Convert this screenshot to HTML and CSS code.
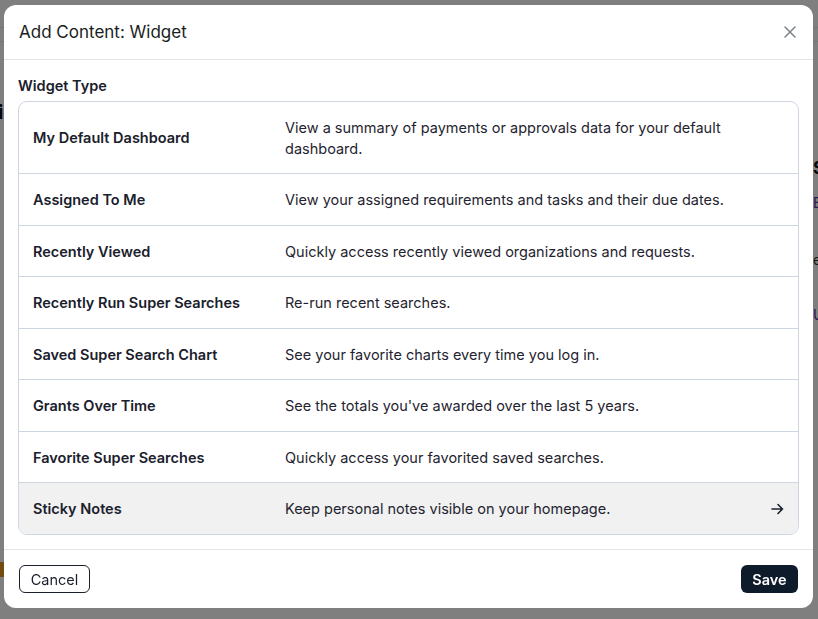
FILE: index.html
```html
<!DOCTYPE html>
<html lang="en">
<head>
    <meta charset="UTF-8">
    <meta name="viewport" content="width=device-width, initial-scale=1.0">
    <title>Add Content: Widget</title>
    <link rel="stylesheet" href="styles.css">
</head>
<body>
    <!-- page behind the dialog -->
    <div class="page">
        <div class="topbar"></div>
        <div class="subbar"></div>
        <div class="page-main">
            <div class="page-left">
                <h2 class="greeting">Hi</h2>
                <div class="badge"></div>
            </div>
            <div class="page-right">
                <h3 class="side-title">Shortcuts</h3>
                <a class="side-link">Edit</a>
                <p class="side-text">email</p>
                <a class="side-link last">Update</a>
            </div>
        </div>
    </div>

    <div class="overlay"></div>

    <div class="modal">
        <div class="modal-header">
            <h1 class="modal-title">Add Content: Widget</h1>
            <button class="close" aria-label="Close">
                <svg width="14" height="14" viewBox="0 0 14 14">
                    <path d="M2 2 L12 12 M12 2 L2 12" stroke="#7b828b" stroke-width="1.5" stroke-linecap="round" fill="none"/>
                </svg>
            </button>
        </div>

        <div class="modal-body">
            <div class="label">Widget Type</div>
            <div class="widgets" id="widgets"></div>
        </div>

        <div class="modal-footer">
            <button class="btn cancel">Cancel</button>
            <button class="btn save">Save</button>
        </div>
    </div>

    <script>
let widgets = [
  { name: "My Default Dashboard", desc: "View a summary of payments or approvals data for your default dashboard." },
  { name: "Assigned To Me", desc: "View your assigned requirements and tasks and their due dates." },
  { name: "Recently Viewed", desc: "Quickly access recently viewed organizations and requests." },
  { name: "Recently Run Super Searches", desc: "Re-run recent searches." },
  { name: "Saved Super Search Chart", desc: "See your favorite charts every time you log in." },
  { name: "Grants Over Time", desc: "See the totals you've awarded over the last 5 years." },
  { name: "Favorite Super Searches", desc: "Quickly access your favorited saved searches." },
  { name: "Sticky Notes", desc: "Keep personal notes visible on your homepage.", active: true },
];

let rows = "";
widgets.forEach(function (w) {
  rows += `<div class="widget${w.active ? " active" : ""}">
    <div class="w-name">${w.name}</div>
    <div class="w-desc">${w.desc}</div>
    <div class="w-arrow">${w.active ? '<svg width="13" height="12" viewBox="0 0 13 12"><path d="M1 6 H11.5 M7 1.5 L11.5 6 L7 10.5" stroke="#1a202c" stroke-width="1.6" fill="none" stroke-linecap="round" stroke-linejoin="round"/></svg>' : ""}</div>
  </div>`;
});
document.getElementById("widgets").innerHTML = rows;
    </script>
</body>
</html>
```

FILE: styles.css
```css
* {
  margin: 0;
  padding: 0;
  box-sizing: border-box;
}

body {
  font-family: Inter, "Noto Sans", sans-serif;
  background: #fff;
  color: #1a202c;
  width: 818px;
  height: 619px;
  overflow: hidden;
}

/* background page */
.topbar {
  height: 28px;
  border-bottom: 1px solid #e8e8e8;
}
.subbar {
  height: 14px;
  border-bottom: 1px solid #e8e8e8;
}
.page-main {
  display: grid;
  grid-template-columns: 813px 1fr;
}
.page-left {
  padding-top: 58px;
}
.greeting {
  margin-left: -17px;
  font-size: 20px;
  font-weight: 700;
  color: #111;
}
.badge {
  margin-top: 438px;
  width: 30px;
  height: 15px;
  background: #e09a1e;
}
.page-right {
  padding-top: 116px;
}
.side-title {
  font-size: 17px;
  font-weight: 700;
  color: #111;
}
.side-link {
  display: block;
  margin-top: 16px;
  font-size: 14px;
  color: #5a2ea6;
}
.side-text {
  margin-top: 40px;
  font-size: 14px;
  color: #333;
}
.side-link.last {
  margin-top: 38px;
}

.overlay {
  position: fixed;
  inset: 0;
  background: rgba(0, 0, 0, 0.5);
}

/* dialog */
.modal {
  position: fixed;
  left: 4px;
  top: 5px;
  width: 809px;
  height: 603px;
  background: #fff;
  border-radius: 12px;
  display: flex;
  flex-direction: column;
}
.modal-header {
  height: 55px;
  display: flex;
  align-items: center;
  justify-content: space-between;
  padding: 0 15px;
  border-bottom: 1px solid #e2e4e8;
}
.modal-title {
  font-size: 17px;
  font-weight: 400;
  color: #1a1d21;
}
.close {
  border: none;
  background: none;
  width: 14px;
  height: 14px;
  display: flex;
  margin-right: 1px;
}

.modal-body {
  flex: 1;
  padding: 16px 14px 0 14px;
}
.label {
  font-size: 14.5px;
  font-weight: 600;
  line-height: 20px;
  margin-bottom: 5px;
}
.widgets {
  border: 1px solid #cdd6e1;
  border-radius: 9px;
  overflow: hidden;
}
.widget {
  display: grid;
  grid-template-columns: 252px 1fr 24px;
  align-items: center;
  padding: 16px 14px 14px 14px;
  font-size: 14.5px;
  line-height: 20.5px;
  border-bottom: 1px solid #cdd6e1;
}
.widget:last-child {
  border-bottom: none;
}
.widget.active {
  background: #f1f1f1;
}
.w-name {
  font-weight: 600;
  color: #1a202c;
}
.w-desc {
  color: #1f2430;
  padding-right: 20px;
}
.w-arrow {
  display: flex;
  justify-content: flex-end;
}

.modal-footer {
  height: 59px;
  display: flex;
  align-items: center;
  justify-content: space-between;
  padding: 0 15px;
  border-top: 1px solid #e2e4e8;
}
.btn {
  font-family: Inter, "Noto Sans", sans-serif;
  font-size: 14.5px;
  height: 28px;
  border-radius: 6px;
  cursor: pointer;
}
.cancel {
  width: 71px;
  background: #fff;
  border: 1px solid #1a202c;
  color: #1a202c;
}
.save {
  width: 57px;
  background: #0e1b2a;
  border: none;
  color: #fff;
  font-weight: 600;
}
```
